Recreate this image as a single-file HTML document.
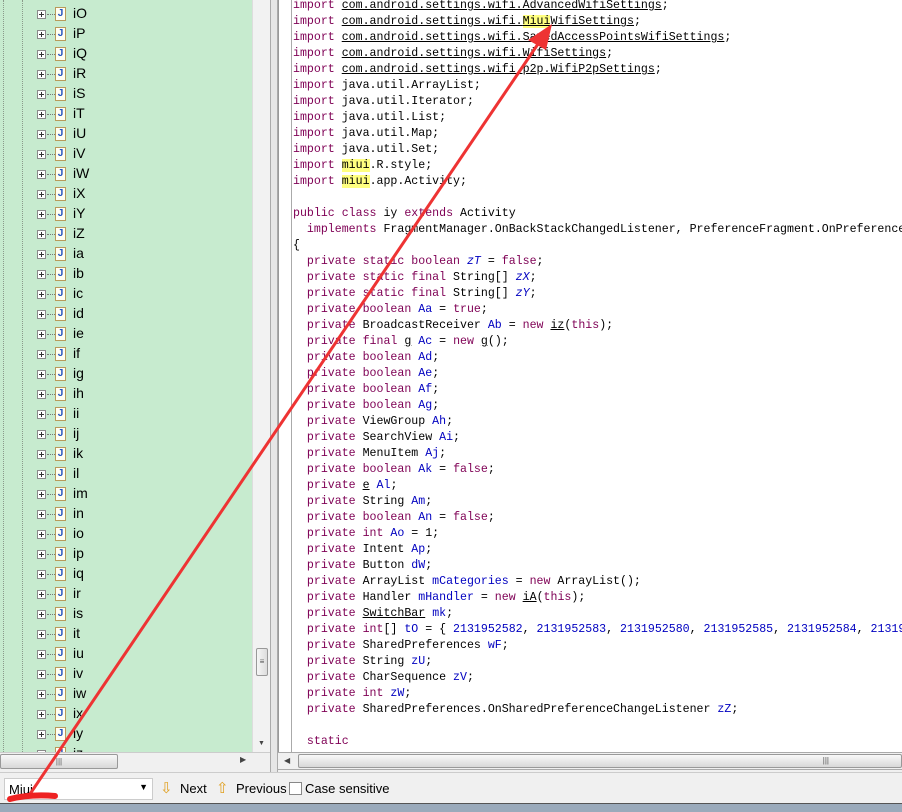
<!DOCTYPE html>
<html><head><meta charset="utf-8">
<style>
*{margin:0;padding:0;box-sizing:border-box}
body{width:902px;height:812px;overflow:hidden;background:#f0f0f0;font-family:"Liberation Sans",sans-serif;position:relative}
#left{position:absolute;left:0;top:0;width:252px;height:752px;background:#c7ebcf;overflow:hidden}
.vl{position:absolute;top:0;height:752px;border-left:1px dotted #8a9a8a}
.row{position:absolute;left:0;height:20px;width:252px}
.pb{position:absolute;left:37px;top:6px;width:9px;height:9px;border:1px solid #8a8a8a;background:#fff}
.pb:before{content:"";position:absolute;left:1px;top:3px;width:5px;height:1px;background:#333}
.pb:after{content:"";position:absolute;left:3px;top:1px;width:1px;height:5px;background:#333}
.dl{position:absolute;left:47px;top:10px;width:8px;border-top:1px dotted #777}
.ic{position:absolute;left:55px;top:3px;width:11px;height:14px;border:1px solid #b89a5a;background:#fffdf2;font:bold 10px "Liberation Sans";color:#2050c0;text-align:center;line-height:12px}
.tx{position:absolute;left:73px;top:1px;font-size:14px;color:#000}
#vsb{position:absolute;left:252px;top:0;width:18px;height:752px;background:#f2f2f2;border-left:1px solid #ddd}
#div{position:absolute;left:270px;top:0;width:8px;height:772px;background:#e6e6e6;border-left:1px solid #aaa;border-right:1px solid #aaa}
#hsbL{position:absolute;left:0;top:752px;width:270px;height:18px;background:#f0f0f0;border-top:1px solid #ccc}
#ed{position:absolute;left:278px;top:0;width:624px;height:752px;background:#fff;border-left:1px solid #999;overflow:hidden}
#ed .g{position:absolute;left:12px;top:0;width:1px;height:752px;background:#aaa}
pre{position:absolute;left:14px;top:-2px;font:11.6px/16px "Liberation Mono",monospace;color:#000;white-space:pre}
.k{color:#7f0055}.f{color:#0000c0;font-style:italic}.b{color:#0000c0}
.u{text-decoration:underline}.h{background:#ffff80}
#hsbR{position:absolute;left:278px;top:752px;width:624px;height:18px;background:#f0f0f0;border-top:1px solid #aaa;border-bottom:1px solid #aaa}
#bar{position:absolute;left:0;top:772px;width:902px;height:31px;background:#f0f0f0;border-top:1px solid #ccc;font-size:13px}
#strip{position:absolute;left:0;top:803px;width:902px;height:9px;background:#9aaabb;border-top:1px solid #555}
</style></head><body>
<div id="left">
<div class="vl" style="left:3px"></div><div class="vl" style="left:22px"></div>
<div id="rows"></div>
</div>
<div id="vsb">
<div style="position:absolute;left:3px;top:648px;width:12px;height:28px;border:1px solid #999;border-radius:2px;background:linear-gradient(90deg,#f6f6f6,#ddd);font-size:8px;text-align:center;line-height:26px;color:#555">≡</div>
<div style="position:absolute;left:5px;top:740px;font-size:7px;color:#444">▼</div>
</div>
<div id="div"></div>
<div id="hsbL"><div style="position:absolute;left:0;top:1px;width:118px;height:15px;border:1px solid #999;border-radius:2px;background:linear-gradient(#f8f8f8,#d8d8d8);font-size:8px;text-align:center;color:#555;line-height:13px">|||</div><div style="position:absolute;left:240px;top:2px;font-size:8px;color:#444">▶</div></div>
<div id="ed"><div class="g"></div>
<pre><span class="k">import</span> <span class="u">com.android.settings.wifi.AdvancedWifiSettings</span>;
<span class="k">import</span> <span class="u">com.android.settings.wifi.<span class="h">Miui</span>WifiSettings</span>;
<span class="k">import</span> <span class="u">com.android.settings.wifi.SavedAccessPointsWifiSettings</span>;
<span class="k">import</span> <span class="u">com.android.settings.wifi.WifiSettings</span>;
<span class="k">import</span> <span class="u">com.android.settings.wifi.p2p.WifiP2pSettings</span>;
<span class="k">import</span> java.util.ArrayList;
<span class="k">import</span> java.util.Iterator;
<span class="k">import</span> java.util.List;
<span class="k">import</span> java.util.Map;
<span class="k">import</span> java.util.Set;
<span class="k">import</span> <span class="h">miui</span>.R.style;
<span class="k">import</span> <span class="h">miui</span>.app.Activity;

<span class="k">public class</span> iy <span class="k">extends</span> Activity
  <span class="k">implements</span> FragmentManager.OnBackStackChangedListener, PreferenceFragment.OnPreferenceStartFragmentCallback
{
  <span class="k">private static boolean</span> <span class="f">zT</span> = <span class="k">false</span>;
  <span class="k">private static final</span> String[] <span class="f">zX</span>;
  <span class="k">private static final</span> String[] <span class="f">zY</span>;
  <span class="k">private boolean</span> <span class="b">Aa</span> = <span class="k">true</span>;
  <span class="k">private</span> BroadcastReceiver <span class="b">Ab</span> = <span class="k">new</span> <span class="u">iz</span>(<span class="k">this</span>);
  <span class="k">private final</span> <span class="u">g</span> <span class="b">Ac</span> = <span class="k">new</span> <span class="u">g</span>();
  <span class="k">private boolean</span> <span class="b">Ad</span>;
  <span class="k">private boolean</span> <span class="b">Ae</span>;
  <span class="k">private boolean</span> <span class="b">Af</span>;
  <span class="k">private boolean</span> <span class="b">Ag</span>;
  <span class="k">private</span> ViewGroup <span class="b">Ah</span>;
  <span class="k">private</span> SearchView <span class="b">Ai</span>;
  <span class="k">private</span> MenuItem <span class="b">Aj</span>;
  <span class="k">private boolean</span> <span class="b">Ak</span> = <span class="k">false</span>;
  <span class="k">private</span> <span class="u">e</span> <span class="b">Al</span>;
  <span class="k">private</span> String <span class="b">Am</span>;
  <span class="k">private boolean</span> <span class="b">An</span> = <span class="k">false</span>;
  <span class="k">private int</span> <span class="b">Ao</span> = 1;
  <span class="k">private</span> Intent <span class="b">Ap</span>;
  <span class="k">private</span> Button <span class="b">dW</span>;
  <span class="k">private</span> ArrayList <span class="b">mCategories</span> = <span class="k">new</span> ArrayList();
  <span class="k">private</span> Handler <span class="b">mHandler</span> = <span class="k">new</span> <span class="u">iA</span>(<span class="k">this</span>);
  <span class="k">private</span> <span class="u">SwitchBar</span> <span class="b">mk</span>;
  <span class="k">private int</span>[] <span class="b">tO</span> = { <span class="b">2131952582</span>, <span class="b">2131952583</span>, <span class="b">2131952580</span>, <span class="b">2131952585</span>, <span class="b">2131952584</span>, <span class="b">2131952586</span> };
  <span class="k">private</span> SharedPreferences <span class="b">wF</span>;
  <span class="k">private</span> String <span class="b">zU</span>;
  <span class="k">private</span> CharSequence <span class="b">zV</span>;
  <span class="k">private int</span> <span class="b">zW</span>;
  <span class="k">private</span> SharedPreferences.OnSharedPreferenceChangeListener <span class="b">zZ</span>;

  <span class="k">static</span></pre>
</div>
<div id="hsbR"><div style="position:absolute;left:6px;top:3px;font-size:8px;color:#444">◀</div><div style="position:absolute;left:20px;top:1px;width:604px;height:14px;border:1px solid #999;border-radius:2px;background:linear-gradient(#f8f8f8,#d8d8d8);font-size:8px;color:#555;line-height:12px;text-align:right;padding-right:72px">|||</div></div>
<div id="bar">
<div style="position:absolute;left:4px;top:5px;width:149px;height:22px;background:#fff;border:1px solid #ccc;padding:3px 4px;font-size:13px">Miui<span style="position:absolute;right:4px;top:3px;font-size:9px">▼</span></div>
<div style="position:absolute;left:160px;top:6px;font-size:15px;color:#e0a020">⇩</div>
<div style="position:absolute;left:180px;top:8px">Next</div>
<div style="position:absolute;left:216px;top:6px;font-size:15px;color:#e0a020">⇧</div>
<div style="position:absolute;left:236px;top:8px">Previous</div>
<div style="position:absolute;left:289px;top:9px;width:13px;height:13px;border:1px solid #888;background:#fff"></div>
<div style="position:absolute;left:305px;top:8px">Case sensitive</div>
</div>
<div id="strip"></div>
<svg style="position:absolute;left:0;top:0" width="902" height="812">
<line x1="30" y1="794" x2="538" y2="44" stroke="#ee3333" stroke-width="3"/>
<polygon points="552,24 528,40 546,50" fill="#ee3333"/>
<path d="M10 799 Q30 794 55 796" stroke="#ee2222" stroke-width="6" fill="none" stroke-linecap="round"/>
</svg>
<script>
var n=["iO","iP","iQ","iR","iS","iT","iU","iV","iW","iX","iY","iZ","ia","ib","ic","id","ie","if","ig","ih","ii","ij","ik","il","im","in","io","ip","iq","ir","is","it","iu","iv","iw","ix","iy","iz"];
var h="";for(var i=0;i<n.length;i++){h+='<div class="row" style="top:'+(4+20*i)+'px"><div class="pb"></div><div class="dl"></div><div class="ic">J</div><div class="tx">'+n[i]+'</div></div>';}
document.getElementById("rows").innerHTML=h;
</script>
</body></html>
